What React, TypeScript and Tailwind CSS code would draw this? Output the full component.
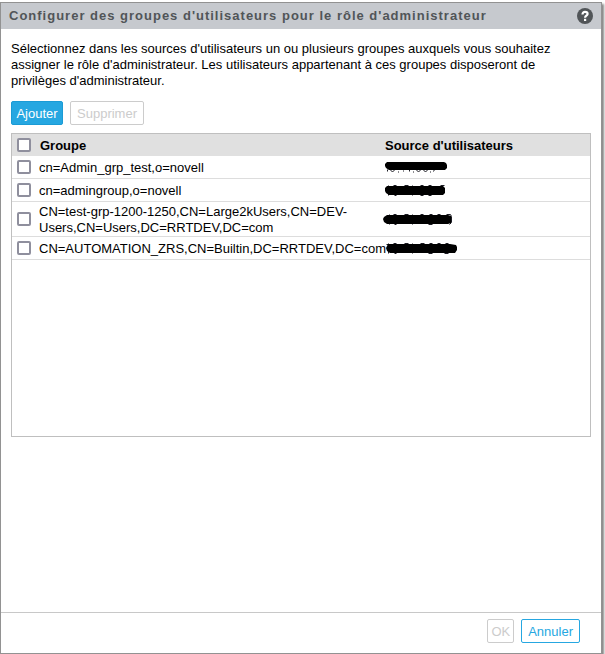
import { useState } from 'react';

type Group = {
  name: string;
  // outline of the marker stroke that hides the address, and the bits of digits around it
  mask: string;
  specks: string;
};

const groups: Group[] = [
  {
    name: 'cn=Admin_grp_test,o=novell',
    mask: 'M4 2H61l2 1 1 2v3l-2 2H6L3 8 2 6 2 4z',
    specks: 'M4 9v2M7 10l2 1 2-1M15 11v1M20 10v1M26 9v2M30 11v1M33 10l2 1 2-1M40 10l2 1 2-1M47 11v1M51 9l-1 2',
  },
  {
    name: 'cn=admingroup,o=novell',
    mask: 'M4 3H60l2 2v5l-2 2H6L3 10 2 8 2 5z',
    specks: 'M5 2v10M10 2h3M11 12h2M21 2h4M29 2v10M37 2h3M37 12h3M45 2h3M45 12h3M57 2h4',
  },
  {
    name: 'CN=test-grp-1200-1250,CN=Large2kUsers,CN=DEV-Users,CN=Users,DC=RRTDEV,DC=com',
    mask: 'M4 3H65l3 1v7l-3 1H4L1 10 0 7 1 5z',
    specks: 'M6 2v10M10 2h3M11 12h2M21 2h4M29 2v10M37 2h3M46 2h3M45 12h4M54 2h3M63 2h4l1 2v6l-2 2',
  },
  {
    name: 'CN=AUTOMATION_ZRS,CN=Builtin,DC=RRTDEV,DC=com',
    mask: 'M5 3H67l6 1 1 2v3l-2 3H7L4 10 3 7z',
    specks: 'M3 3h2M5 2v10M10 2h3M11 12h2M21 2h4M29 2v10M37 2h4M46 2h3M45 12h4M54 2h3M62 2h3M61 12h4',
  },
];

const checkbox =
  'block size-3.5 shrink-0 appearance-none rounded-xs border-2 border-[#8f8f9d] bg-white checked:bg-[#26a7e1]';

function HelpIcon() {
  return (
    <svg viewBox="0 0 16 16" className="size-4" aria-hidden="true">
      <circle cx="8" cy="8" r="8" fill="#515558" />
      <path d="M5.5 6.4C5.5 4.6 6.6 3.9 8 3.9s2.6.8 2.6 2.1c0 1.7-2.5 1.8-2.5 3.7" fill="none" stroke="#fff" strokeWidth="2.2" />
      <path d="M7 10.8h2.2v2.2H7z" fill="#fff" />
    </svg>
  );
}

export default function App() {
  const [selected, setSelected] = useState<string[]>([]);

  const toggle = (name: string) => {
    setSelected(selected.includes(name) ? selected.filter((n) => n !== name) : [...selected, name]);
  };

  return (
    <div className="flex min-h-screen flex-col bg-white pt-0.5 pr-[3px] font-['Liberation_Sans',Arial,sans-serif] text-[13px] leading-4 text-black">
      <main className="flex flex-1 flex-col border border-[#929292] shadow-[2px_2px_2px_#888888]">
        <header className="flex h-[26px] items-center justify-between bg-[#c6c9ce] px-2">
          <h1 className="font-bold tracking-[1px] text-[#515558]">
            Configurer des groupes d'utilisateurs pour le rôle d'administrateur
          </h1>
          <button type="button" aria-label="Aide">
            <HelpIcon />
          </button>
        </header>

        <div className="flex-1 px-2.5 pt-3">
          <p className="pr-8">
            Sélectionnez dans les sources d'utilisateurs un ou plusieurs groupes auxquels vous souhaitez assigner le rôle
            d'administrateur. Les utilisateurs appartenant à ces groupes disposeront de privilèges d'administrateur.
          </p>

          <div className="mt-3 flex gap-[7px]">
            <button type="button" className="h-6 min-w-13 rounded-xs border border-[#1b9bd5] bg-[#26a7e1] px-1 pt-0.5 text-white">
              Ajouter
            </button>
            <button
              type="button"
              disabled={selected.length === 0}
              className="h-6 min-w-[74px] rounded-xs border border-[#cccccc] px-1 pt-0.5 text-[#cccccc]"
            >
              Supprimer
            </button>
          </div>

          <div className="mt-2 min-h-[304px] border border-[#bfbfbf]">
            <table className="w-full table-fixed border-separate border-spacing-0">
              <thead>
                <tr className="h-[22px] bg-[#e0e0e0] text-left">
                  <th className="w-[27px] pl-[5px]">
                    <input
                      type="checkbox"
                      aria-label="Tout sélectionner"
                      className={checkbox}
                      checked={selected.length === groups.length}
                      onChange={(e) => setSelected(e.target.checked ? groups.map((g) => g.name) : [])}
                    />
                  </th>
                  <th className="w-[346px] pt-0.5 pl-px">Groupe</th>
                  <th className="pt-0.5">Source d'utilisateurs</th>
                </tr>
              </thead>
              <tbody>
                {groups.map((group, i) => (
                  <tr key={group.name} className="h-[23px] *:border-b *:border-[#dddddd]">
                    <td className="pl-[5px]">
                      <input
                        id={`group-${i}`}
                        type="checkbox"
                        className={checkbox}
                        checked={selected.includes(group.name)}
                        onChange={() => toggle(group.name)}
                      />
                    </td>
                    <td className="pt-0.5">
                      <label htmlFor={`group-${i}`} className="block">
                        {group.name}
                      </label>
                    </td>
                    <td>
                      <svg viewBox="0 0 76 14" className="-ml-0.5 block h-3.5 w-[76px]" aria-hidden="true">
                        <path d={group.specks} transform="translate(.5 .5)" fill="none" stroke="#1c1c24" strokeWidth="1" />
                        <path d={group.mask} fill="#000" />
                      </svg>
                    </td>
                  </tr>
                ))}
              </tbody>
            </table>
          </div>
        </div>

        <footer className="flex justify-end gap-[7px] border-t border-[#c8c8c8] pt-1.5 pr-[21px] pb-2.5">
          <button
            type="button"
            disabled={selected.length === 0}
            className="h-6 rounded-xs border border-[#cccccc] px-[3px] pt-0.5 text-[#cccccc]"
          >
            OK
          </button>
          <button type="button" className="h-6 rounded-xs border border-[#26a7e1] px-1.5 pt-0.5 text-[#26a7e1]">
            Annuler
          </button>
        </footer>
      </main>
    </div>
  );
}
